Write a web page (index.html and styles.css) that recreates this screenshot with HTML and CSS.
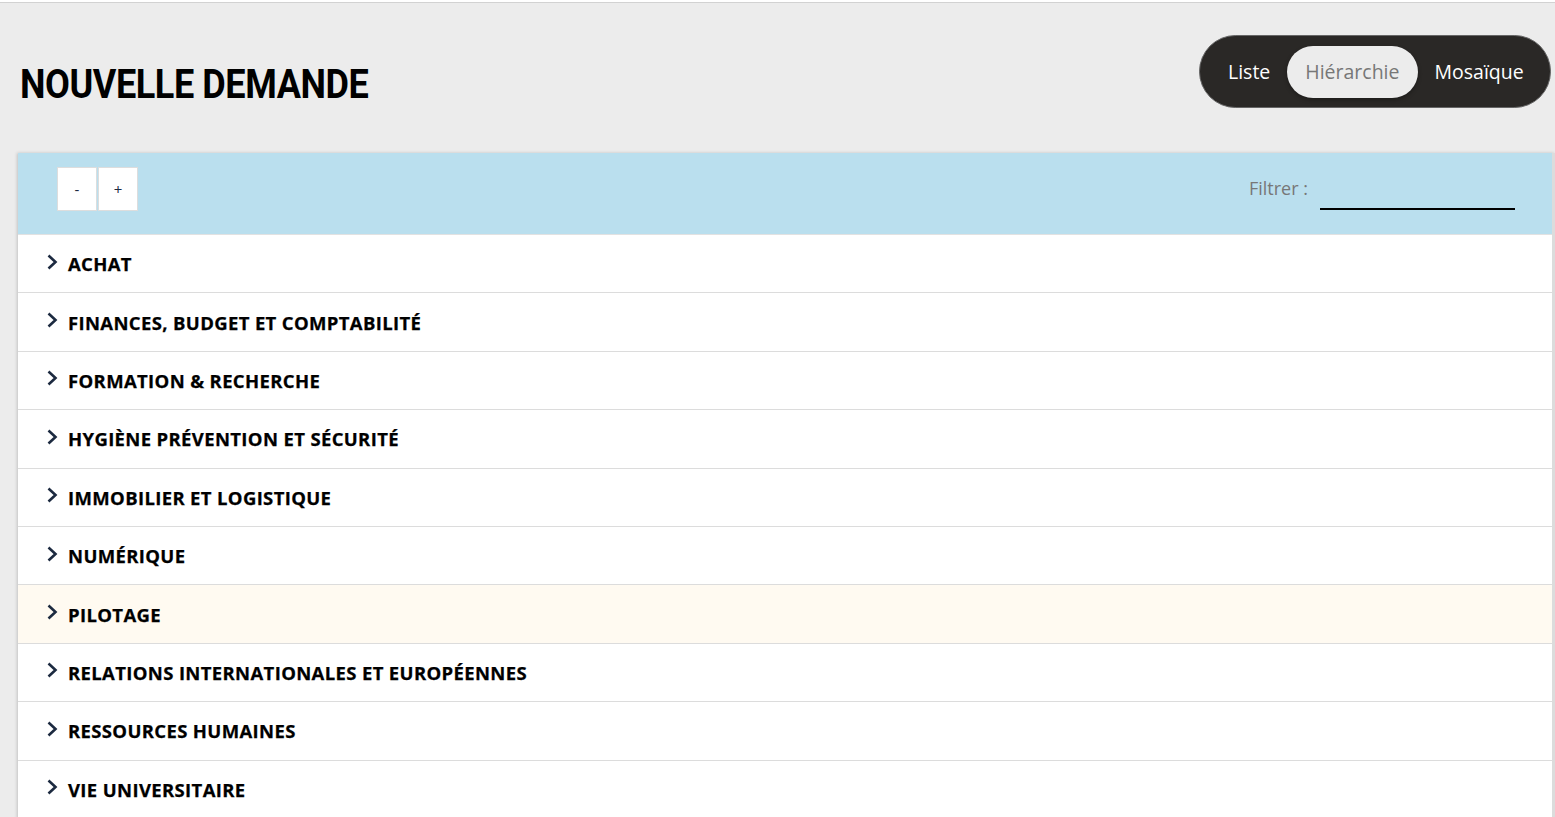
FILE: index.html
```html
<!DOCTYPE html>
<html lang="fr">
<head>
<meta charset="utf-8">
<title>Nouvelle demande</title>
<link rel="stylesheet" href="styles.css">
</head>
<body>
<div class="page">
  <header class="top">
    <h1 class="title">NOUVELLE DEMANDE</h1>
    <nav class="views">
      <span class="view">Liste</span>
      <span class="view active">Hiérarchie</span>
      <span class="view">Mosaïque</span>
    </nav>
  </header>
  <section class="panel">
    <div class="toolbar">
      <div class="zoom-btns">
        <button class="zbtn">-</button>
        <button class="zbtn">+</button>
      </div>
      <label class="filter">
        <span class="filter-label">Filtrer :</span>
        <span class="filter-input"></span>
      </label>
    </div>
    <ul class="tree">
      <li class="item"><svg class="chev" viewBox="0 0 12 16"><path d="M2.5 1.5 L9.5 8 L2.5 14.5" /></svg><span>ACHAT</span></li>
      <li class="item"><svg class="chev" viewBox="0 0 12 16"><path d="M2.5 1.5 L9.5 8 L2.5 14.5" /></svg><span>FINANCES, BUDGET ET COMPTABILITÉ</span></li>
      <li class="item"><svg class="chev" viewBox="0 0 12 16"><path d="M2.5 1.5 L9.5 8 L2.5 14.5" /></svg><span>FORMATION &amp; RECHERCHE</span></li>
      <li class="item"><svg class="chev" viewBox="0 0 12 16"><path d="M2.5 1.5 L9.5 8 L2.5 14.5" /></svg><span>HYGIÈNE PRÉVENTION ET SÉCURITÉ</span></li>
      <li class="item"><svg class="chev" viewBox="0 0 12 16"><path d="M2.5 1.5 L9.5 8 L2.5 14.5" /></svg><span>IMMOBILIER ET LOGISTIQUE</span></li>
      <li class="item"><svg class="chev" viewBox="0 0 12 16"><path d="M2.5 1.5 L9.5 8 L2.5 14.5" /></svg><span>NUMÉRIQUE</span></li>
      <li class="item hover"><svg class="chev" viewBox="0 0 12 16"><path d="M2.5 1.5 L9.5 8 L2.5 14.5" /></svg><span>PILOTAGE</span></li>
      <li class="item"><svg class="chev" viewBox="0 0 12 16"><path d="M2.5 1.5 L9.5 8 L2.5 14.5" /></svg><span>RELATIONS INTERNATIONALES ET EUROPÉENNES</span></li>
      <li class="item"><svg class="chev" viewBox="0 0 12 16"><path d="M2.5 1.5 L9.5 8 L2.5 14.5" /></svg><span>RESSOURCES HUMAINES</span></li>
      <li class="item"><svg class="chev" viewBox="0 0 12 16"><path d="M2.5 1.5 L9.5 8 L2.5 14.5" /></svg><span>VIE UNIVERSITAIRE</span></li>
    </ul>
  </section>
</div>
</body>
</html>
```

FILE: styles.css
```css
html, body {
  margin: 0;
  padding: 0;
  background: #ececec;
  height: 100%;
  overflow: hidden;
}
body {
  font-family: "Open Sans", "DejaVu Sans", sans-serif;
}
.page {
  border-top: 2px solid #fff;
}
.page::before {
  content: "";
  display: block;
  height: 1px;
  background: #d2d2d2;
}
.top {
  display: flex;
  justify-content: space-between;
  align-items: flex-start;
  padding: 33px 4px 0 20px;
  height: 117px;
}
.title {
  margin: 26px 0 0 0;
  font-family: "Roboto", "Liberation Sans", sans-serif;
  font-weight: 700;
  font-size: 41px;
  line-height: 44px;
  color: #000;
  letter-spacing: -0.5px;
  transform: scaleX(0.88);
  transform-origin: left center;
}
.views {
  display: flex;
  align-items: center;
  background: #2a2826;
  border: 1px solid #666;
  border-radius: 37px;
  height: 73px;
  padding: 0 28px 0 28px;
  box-sizing: border-box;
  width: 352px;
  margin-top: -1px;
}
.view {
  color: #fff;
  font-size: 19.5px;
  line-height: 52px;
}
.view.active {
  background: #ececec;
  color: #777;
  border-radius: 26px;
  padding: 0 18px;
  margin: 0 17px;
  box-shadow: 0 2px 4px rgba(0,0,0,0.3);
}
.panel {
  margin: 0 0 0 18px;
  background: #fff;
  box-shadow: -1px 0 3px rgba(0,0,0,0.18);
  border-right: 3px solid #dcdcdc;
}
.toolbar {
  background: #badfee;
  height: 82px;
  display: flex;
  align-items: flex-start;
  justify-content: space-between;
  padding: 0 37px 0 39px;
  border-bottom: 1px solid #e2e2e2;
  box-sizing: border-box;
}
.zoom-btns {
  display: flex;
  gap: 1px;
  margin-top: 14px;
}
.zbtn {
  width: 40px;
  height: 44px;
  background: #fff;
  border: 1px solid #ddd;
  font-family: "Open Sans", sans-serif;
  font-size: 15px;
  color: #1c2a40;
  padding: 0;
}
.filter {
  display: flex;
  align-items: flex-start;
  gap: 12px;
  margin-top: 23px;
}
.filter-label {
  color: #777;
  font-size: 18px;
  line-height: 24px;
}
.filter-input {
  display: block;
  width: 195px;
  height: 32px;
  border-bottom: 2px solid #000;
}
.tree {
  list-style: none;
  margin: 0;
  padding: 0;
}
.item {
  display: flex;
  align-items: center;
  height: 57.4px;
  border-bottom: 1px solid #dcdcdc;
  padding-left: 28px;
  font-size: 18.5px;
  font-weight: 700;
  color: #000;
  letter-spacing: 0.35px;
  -webkit-text-stroke: 0.25px #000;
}
.item.hover {
  background: #fffaf1;
  border-top: 1px solid #dcdcdc;
  margin-top: -1px;
}
.chev {
  width: 12px;
  height: 16px;
  margin-right: 10px;
  margin-top: -4px;
  fill: none;
  stroke: #1c2a40;
  stroke-width: 2.6;
  -webkit-text-stroke: 0;
}
```
